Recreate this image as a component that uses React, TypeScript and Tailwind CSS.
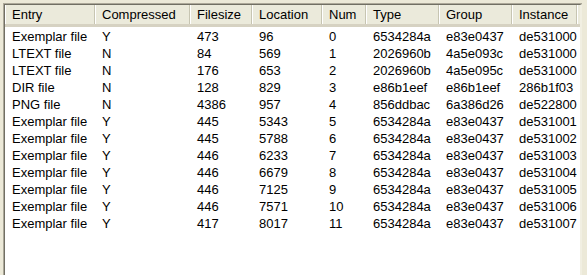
const columns = [
  { key: 'entry', label: 'Entry', width: 'w-[90px]' },
  { key: 'compressed', label: 'Compressed', width: 'w-[95px]' },
  { key: 'filesize', label: 'Filesize', width: 'w-[62px]' },
  { key: 'location', label: 'Location', width: 'w-[70px]' },
  { key: 'num', label: 'Num', width: 'w-[44px]' },
  { key: 'type', label: 'Type', width: 'w-[73px]' },
  { key: 'group', label: 'Group', width: 'w-[73px]' },
  { key: 'instance', label: 'Instance', width: 'w-[65px]' },
];

const rows = [
  ['Exemplar file', 'Y', '473', '96', '0', '6534284a', 'e83e0437', 'de531000'],
  ['LTEXT file', 'N', '84', '569', '1', '2026960b', '4a5e093c', 'de531000'],
  ['LTEXT file', 'N', '176', '653', '2', '2026960b', '4a5e095c', 'de531000'],
  ['DIR file', 'N', '128', '829', '3', 'e86b1eef', 'e86b1eef', '286b1f03'],
  ['PNG file', 'N', '4386', '957', '4', '856ddbac', '6a386d26', 'de522800'],
  ['Exemplar file', 'Y', '445', '5343', '5', '6534284a', 'e83e0437', 'de531001'],
  ['Exemplar file', 'Y', '445', '5788', '6', '6534284a', 'e83e0437', 'de531002'],
  ['Exemplar file', 'Y', '446', '6233', '7', '6534284a', 'e83e0437', 'de531003'],
  ['Exemplar file', 'Y', '446', '6679', '8', '6534284a', 'e83e0437', 'de531004'],
  ['Exemplar file', 'Y', '446', '7125', '9', '6534284a', 'e83e0437', 'de531005'],
  ['Exemplar file', 'Y', '446', '7571', '10', '6534284a', 'e83e0437', 'de531006'],
  ['Exemplar file', 'Y', '417', '8017', '11', '6534284a', 'e83e0437', 'de531007'],
];

const App = () => {
  return (
    <div
      className="w-[587px] h-[275px] overflow-hidden bg-[#ece9d8] pt-[3px] pl-[3px] pr-[5px]"
      style={{ fontFamily: '"Liberation Sans", Arial, sans-serif' }}
    >
      <div className="h-[300px] border-t border-l border-[#aca899]">
        <div className="h-full border-t border-l border-[#716f64] border-r-2 border-r-[#f1efe2] bg-white">
          {/* header */}
          <div className="flex h-[22px] bg-[#ebeadb] border-b-[3px] border-b-[#d6d2c2]">
            {columns.map((col) => (
              <div
                key={col.key}
                className={`${col.width} shrink-0 flex items-center pl-[6px] text-[13px] text-black border-r border-[#c7c5b2] border-l border-l-white`}
              >
                {col.label}
              </div>
            ))}
            <div className="flex-1 border-l border-l-white" />
          </div>

          {/* rows */}
          <div className="pt-[1px]">
            {rows.map((row, i) => (
              <div key={i} className="flex h-[17px] items-center">
                {row.map((cell, j) => (
                  <div
                    key={j}
                    className={`${columns[j].width} shrink-0 pl-[7px] text-[13px] leading-[17px] text-black whitespace-nowrap overflow-hidden`}
                  >
                    {cell}
                  </div>
                ))}
              </div>
            ))}
          </div>
        </div>
      </div>
    </div>
  );
};

export default App;
